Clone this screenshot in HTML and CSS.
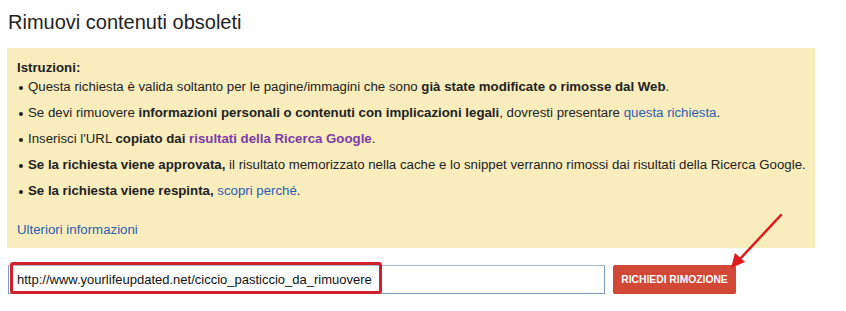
FILE: index.html
```html
<!DOCTYPE html>
<html lang="it">
<head>
<meta charset="utf-8">
<title>Rimuovi contenuti obsoleti</title>
<link rel="stylesheet" href="styles.css">
</head>
<body>
<div class="page">
  <h1 class="title">Rimuovi contenuti obsoleti</h1>
  <div class="notice">
    <div class="notice-head">Istruzioni:</div>
    <ul class="list">
      <li>Questa richiesta è valida soltanto per le pagine/immagini che sono <b>già state modificate o rimosse dal Web</b>.</li>
      <li>Se devi rimuovere <b>informazioni personali o contenuti con implicazioni legali</b>, dovresti presentare <a class="link" href="#">questa richiesta</a>.</li>
      <li>Inserisci l'URL <b>copiato dai <a class="link visited" href="#">risultati della Ricerca Google</a></b>.</li>
      <li><b>Se la richiesta viene approvata,</b> il risultato memorizzato nella cache e lo snippet verranno rimossi dai risultati della Ricerca Google.</li>
      <li><b>Se la richiesta viene respinta,</b> <a class="link" href="#">scopri perché</a>.</li>
    </ul>
    <a class="link more" href="#">Ulteriori informazioni</a>
  </div>
  <div class="form">
    <div class="field">
      <input class="url" type="text" value="http://www.yourlifeupdated.net/ciccio_pasticcio_da_rimuovere">
      <span class="highlight"></span>
    </div>
    <button class="btn" type="button">RICHIEDI RIMOZIONE</button>
    <svg class="arrow" width="62" height="60" viewBox="0 0 62 60">
      <line x1="56" y1="2" x2="14" y2="47" stroke="#e01b1b" stroke-width="2.5" stroke-linecap="round"/>
      <polygon points="6,55 10,40 20,49" fill="#e01b1b"/>
    </svg>
  </div>
</div>
</body>
</html>
```

FILE: styles.css
```css
html, body {
  margin: 0;
  padding: 0;
  background: #ffffff;
}
body {
  font-family: Arial, "Liberation Sans", sans-serif;
  color: #222222;
}
.page {
  padding: 10px 0 0 7px;
  width: 808px;
}
.title {
  margin: 0 0 0 1px;
  font-size: 20px;
  font-weight: normal;
  line-height: 24px;
  color: #222222;
}
.notice {
  margin-top: 14px;
  background: #f9ecbd;
  padding: 12px 4px 10px 10px;
  height: 178px;
  font-size: 13.25px;
  line-height: 16px;
}
.notice-head {
  font-weight: bold;
}
.list {
  margin: 0;
  padding: 1px 0 0 11px;
  list-style: none;
}
.list li {
  position: relative;
  margin-top: 2px;
  margin-bottom: 10px;
  white-space: nowrap;
}
.list li::before {
  content: "";
  position: absolute;
  left: -9px;
  top: 7px;
  width: 4px;
  height: 4px;
  border-radius: 50%;
  background: #222;
}
.link {
  color: #2a5db0;
  text-decoration: none;
}
.link.visited {
  color: #7b3ba8;
}
.more {
  display: inline-block;
  margin-top: 13px;
}
.form {
  position: relative;
  display: flex;
  align-items: center;
  margin-top: 17px;
  margin-left: 1px;
}
.field {
  position: relative;
}
.url {
  box-sizing: border-box;
  width: 597px;
  height: 29px;
  border: 1px solid #7f9db9;
  border-top-color: #a5b9d6;
  padding: 0 8px;
  font-family: Arial, "Liberation Sans", sans-serif;
  font-size: 13px;
  color: #111;
  outline: none;
}
.highlight {
  position: absolute;
  left: 2px;
  top: -3px;
  width: 366px;
  height: 26px;
  border: 3px solid #d21f2b;
  border-radius: 3px;
  pointer-events: none;
}
.btn {
  margin-left: 8px;
  height: 29px;
  width: 123px;
  padding: 0;
  border: none;
  border-radius: 2px;
  background: #d14836;
  color: #ffffff;
  font-family: Arial, "Liberation Sans", sans-serif;
  font-size: 10.3px;
  font-weight: bold;
  box-shadow: 0 1px 1px rgba(0,0,0,0.2);
}
.arrow {
  position: absolute;
  left: 717px;
  top: -52px;
}
```
